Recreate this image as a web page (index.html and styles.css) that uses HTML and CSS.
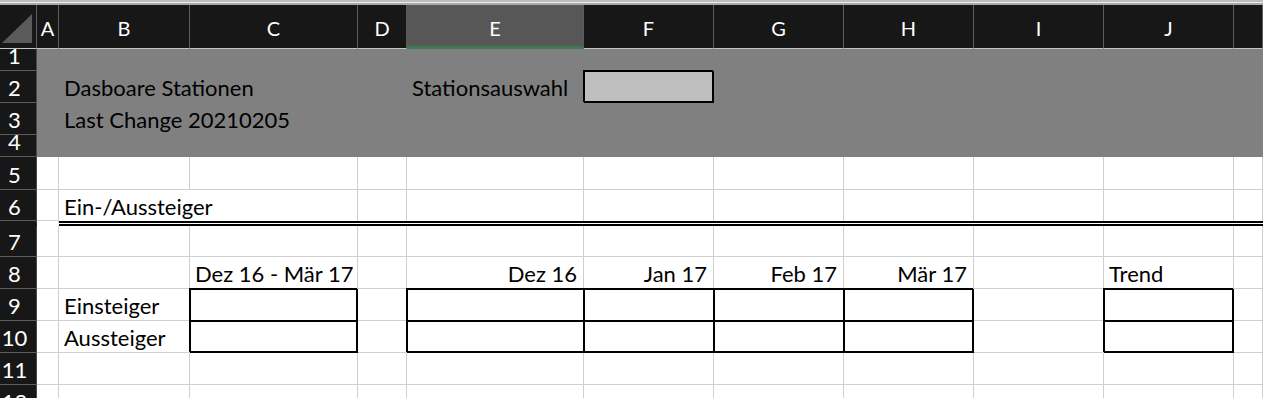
FILE: index.html
```html
<!DOCTYPE html>
<html lang="de">
<head>
  <meta charset="UTF-8">
  <meta name="viewport" content="width=device-width, initial-scale=1.0">
  <title>Dashboard Stationen</title>

  <link rel="stylesheet" href="styles.css">
</head>

<body>
  <div class="topbar"></div>
  <div class="sheet">
    <!-- column headers -->
    <div class="ch corner">
      <svg width="37" height="43" viewBox="0 0 37 43"><polygon points="2,38 32,38 32,9" fill="#5a5a5a"/></svg>
    </div>
    <div class="ch">A</div>
    <div class="ch">B</div>
    <div class="ch">C</div>
    <div class="ch">D</div>
    <div class="ch sel">E</div>
    <div class="ch">F</div>
    <div class="ch">G</div>
    <div class="ch">H</div>
    <div class="ch">I</div>
    <div class="ch">J</div>
    <div class="ch"></div>

    <!-- row 1 -->
    <div class="rh">1</div>
    <div class="c g"></div><div class="c g"></div><div class="c g"></div><div class="c g"></div><div class="c g"></div>
    <div class="c g"></div><div class="c g"></div><div class="c g"></div><div class="c g"></div><div class="c g"></div><div class="c g"></div>

    <!-- row 2 -->
    <div class="rh">2</div>
    <div class="c g"></div>
    <div class="c g spill front">Dasboare Stationen</div>
    <div class="c g"></div>
    <div class="c g"></div>
    <div class="c g">Stationsauswahl</div>
    <div class="c pick bx bx-r bx-b"></div>
    <div class="c g"></div><div class="c g"></div><div class="c g"></div><div class="c g"></div><div class="c g"></div>

    <!-- row 3 -->
    <div class="rh">3</div>
    <div class="c g"></div>
    <div class="c g spill front">Last Change 20210205</div>
    <div class="c g"></div><div class="c g"></div><div class="c g"></div><div class="c g"></div>
    <div class="c g"></div><div class="c g"></div><div class="c g"></div><div class="c g"></div><div class="c g"></div>

    <!-- row 4 -->
    <div class="rh">4</div>
    <div class="c g"></div><div class="c g"></div><div class="c g"></div><div class="c g"></div><div class="c g"></div>
    <div class="c g"></div><div class="c g"></div><div class="c g"></div><div class="c g"></div><div class="c g"></div><div class="c g"></div>

    <!-- row 5 -->
    <div class="rh">5</div>
    <div class="c"></div><div class="c"></div><div class="c"></div><div class="c"></div><div class="c"></div>
    <div class="c"></div><div class="c"></div><div class="c"></div><div class="c"></div><div class="c"></div><div class="c"></div>

    <!-- row 6 -->
    <div class="rh r6">6</div>
    <div class="c a6"></div>
    <div class="c spill r6">Ein-/Aussteiger</div>
    <div class="c"></div><div class="c"></div><div class="c"></div><div class="c"></div>
    <div class="c"></div><div class="c"></div><div class="c"></div><div class="c"></div><div class="c"></div>

    <!-- row 7 -->
    <div class="rh">7</div>
    <div class="c"></div>
    <div class="c dbl"></div><div class="c dbl"></div><div class="c dbl"></div><div class="c dbl"></div><div class="c dbl"></div>
    <div class="c dbl"></div><div class="c dbl"></div><div class="c dbl"></div><div class="c dbl"></div><div class="c dbl"></div>

    <!-- row 8 -->
    <div class="rh">8</div>
    <div class="c"></div>
    <div class="c"></div>
    <div class="c">Dez 16 - Mär 17</div>
    <div class="c"></div>
    <div class="c r">Dez 16</div>
    <div class="c r">Jan 17</div>
    <div class="c r">Feb 17</div>
    <div class="c r">Mär 17</div>
    <div class="c"></div>
    <div class="c">Trend</div>
    <div class="c"></div>

    <!-- row 9 -->
    <div class="rh">9</div>
    <div class="c"></div>
    <div class="c">Einsteiger</div>
    <div class="c bx bx-r"></div>
    <div class="c"></div>
    <div class="c bx"></div>
    <div class="c bx"></div>
    <div class="c bx"></div>
    <div class="c bx bx-r"></div>
    <div class="c"></div>
    <div class="c bx bx-r"></div>
    <div class="c"></div>

    <!-- row 10 -->
    <div class="rh">10</div>
    <div class="c"></div>
    <div class="c">Aussteiger</div>
    <div class="c bx bx-r bx-b"></div>
    <div class="c"></div>
    <div class="c bx bx-b"></div>
    <div class="c bx bx-b"></div>
    <div class="c bx bx-b"></div>
    <div class="c bx bx-r bx-b"></div>
    <div class="c"></div>
    <div class="c bx bx-r bx-b"></div>
    <div class="c"></div>

    <!-- row 11 -->
    <div class="rh">11</div>
    <div class="c"></div><div class="c"></div><div class="c"></div><div class="c"></div><div class="c"></div>
    <div class="c"></div><div class="c"></div><div class="c"></div><div class="c"></div><div class="c"></div><div class="c"></div>

    <!-- row 12 -->
    <div class="rh">12</div>
    <div class="c"></div><div class="c"></div><div class="c"></div><div class="c"></div><div class="c"></div>
    <div class="c"></div><div class="c"></div><div class="c"></div><div class="c"></div><div class="c"></div><div class="c"></div>
  </div>
</body>
</html>
```

FILE: styles.css
```css
body {
  margin: 0;
  height: 100vh;
  overflow: hidden;
  background-color: #fff;
  font-family: Lato, 'Liberation Sans', sans-serif;
}

.topbar {
  height: 5px;
  background: linear-gradient(#bdbdbd 0 2px, #ececec 2px 3px, #a9a9a9 3px);
}

.sheet {
  display: grid;
  grid-template-columns: 37px 22px 131px 168px 49px 177px 130px 130px 130px 130px 130px 1fr;
  grid-template-rows: 44px 22px 32px 32px 22px 33px 36px 31px 32px 32px 32px 32px 32px;
}

/* column headers */
.ch {
  box-sizing: border-box;
  display: flex;
  justify-content: center;
  align-items: center;
  padding-top: 3px;
  background-color: #171717;
  color: #fff;
  font-size: 20px;
  border-right: 1px solid #5c5c5c;
  border-bottom: 1px solid #c4c4c4;
}

.ch.sel {
  background-color: #575757;
  border-bottom: 3px solid #3e7c4f;
  padding-top: 5px;
}

.corner {
  display: block;
  padding: 0;
}

.corner svg {
  display: block;
}

/* row headers */
.rh {
  box-sizing: border-box;
  display: flex;
  justify-content: center;
  align-items: flex-end;
  padding: 0 7px 4px 0;
  background-color: #171717;
  color: #fff;
  font-size: 22px;
  line-height: 20px;
  border-right: 1px solid #4a4a4a;
  border-bottom: 1px solid #5c5c5c;
}

.rh.r6 {
  border-bottom: 5px solid #171717;
  box-shadow: inset 0 -1px 0 #5c5c5c;
}

/* cells */
.c {
  box-sizing: border-box;
  display: flex;
  align-items: flex-end;
  padding: 0 5px 1px;
  font-size: 22px;
  color: #000;
  white-space: nowrap;
  border-right: 1px solid #cfcfcf;
  border-bottom: 1px solid #cfcfcf;
}

.c.r {
  justify-content: flex-end;
  padding-right: 6px;
}

.c.g {
  background-color: #808080;
  border-color: #808080;
}

.c.spill {
  border-right: 0;
}

.c.front {
  position: relative;
  z-index: 1;
}

.c.r6 {
  padding-bottom: 5px;
}

.c.a6 {
  border-bottom: 5px solid transparent;
  box-shadow: inset 0 -1px 0 #cfcfcf;
}

/* double rule under row 6 */
.c.dbl {
  box-shadow: 0 -2px 0 #000, 0 -3px 0 #fff, 0 -5px 0 #000;
}

/* boxed input cells */
.c.bx {
  border-right-color: #000;
  border-bottom-color: #000;
  box-shadow: -1px -1px 0 #000, inset 1px 1px 0 #000, var(--sr, 0 0 #0000), var(--sb, 0 0 #0000);
}

.c.bx-r {
  --sr: inset -1px 0 0 #000;
}

.c.bx-b {
  --sb: inset 0 -1px 0 #000;
}

.c.pick {
  background-color: #bfbfbf;
}
```
